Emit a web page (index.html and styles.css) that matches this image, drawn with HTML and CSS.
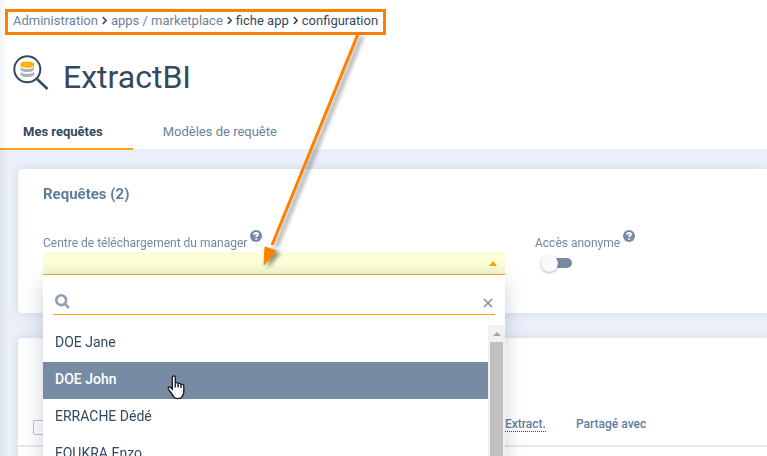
FILE: index.html
```html
<!DOCTYPE html>
<html lang="fr">
<head>
	<meta charset="utf-8">
	<title>ExtractBI - configuration</title>
	<link rel="stylesheet" href="styles.css">
</head>
<body>

<header class="pageHeader">
	<nav class="breadcrumb" aria-label="Fil d'Ariane">
		<a href="#">Administration</a>
		<svg class="chevron" viewBox="0 0 6 10"><path d="M1 1l4 4-4 4"/></svg>
		<a href="#">apps / marketplace</a>
		<svg class="chevron" viewBox="0 0 6 10"><path d="M1 1l4 4-4 4"/></svg>
		<span>fiche app</span>
		<svg class="chevron" viewBox="0 0 6 10"><path d="M1 1l4 4-4 4"/></svg>
		<span>configuration</span>
	</nav>

	<div class="appTitle">
		<svg class="appLogo" viewBox="0 0 36 36">
			<circle cx="14.300" cy="14.300" r="13" fill="#fff" stroke="#34495e" stroke-width="2"/>
			<path d="M24 24l10.500 10" stroke="#34495e" stroke-width="2.500" fill="none"/>
			<path d="M7.500 16.300c1 2.600 12.500 2.600 13.500 0v3.400c-1 3.200-12.500 3.200-13.500 0z" fill="#a9b3be"/>
			<path d="M7.500 11.300c1 2.600 12.500 2.600 13.500 0v3.400c-1 3.200-12.500 3.200-13.500 0z" fill="#a9b3be"/>
			<path d="M7.500 8.500c1-2.800 12.500-2.800 13.500 0v2.200c-1 2.800-12.500 2.800-13.500 0z" fill="#fbb400"/>
			<path d="M7.500 11.600c1 2.600 12.500 2.600 13.500 0M7.500 16.200c1 2.800 12.500 2.800 13.500 0" fill="none" stroke="#fff"/>
		</svg>
		<h1>ExtractBI</h1>
	</div>

	<nav class="tabs">
		<a class="tab tabActive" href="#">Mes requêtes</a>
		<a class="tab" href="#">Modèles de requête</a>
	</nav>
</header>

<main class="content">
	<section class="card settings">
		<h2>Requêtes (2)</h2>
		<div class="fields">
			<div class="field fieldManager">
				<div class="fieldLabel">
					<label id="managerLabel" for="manager">Centre de téléchargement du manager</label>
					<svg class="help" viewBox="0 0 12 12"><circle cx="6" cy="6" r="6"/><path d="M4.200 4.700c0-2.300 3.700-2.200 3.700-.2 0 1.300-1.700 1.200-1.700 2.500M6.200 8.200v1.500"/></svg>
				</div>
				<button class="combo" id="manager" type="button" aria-haspopup="listbox" aria-expanded="true" aria-labelledby="managerLabel">
					<svg class="caret" viewBox="0 0 8 5"><path d="M0 5l4-5 4 5z"/></svg>
				</button>
				<div class="dropdown">
					<div class="search">
						<svg class="searchIcon" viewBox="0 0 14 14"><circle cx="5.800" cy="5.800" r="4.600"/><path d="M9.200 9.200l3.800 3.800"/></svg>
						<input type="text" aria-label="Rechercher">
						<button class="clear" type="button" aria-label="Effacer">
							<svg viewBox="0 0 10 10"><path d="M1 1l8 8M9 1l-8 8"/></svg>
						</button>
					</div>
					<div class="results">
						<ul role="listbox" aria-labelledby="managerLabel">
							<li role="option">DOE Jane</li>
							<li role="option" class="hover" aria-selected="true">DOE John
								<svg class="cursor" viewBox="0 0 18 24"><path d="M5 2.200C5 .5 7.800.5 7.800 2.200V8c.3-1.200 2.700-1 2.800.6.5-1 2.600-.8 2.700.9.500-.9 2.700-.7 2.700 1.200v5.500c0 2-1.300 3.500-1.700 4.800-1.500 2.300-6.500 2.300-8 0C5.500 18.500 2.500 16 1.200 13.500c-.7-1.700 1-2.600 2.200-1.500L5 13.500z"/><path d="M7.800 8v4M10.600 9v3M13.300 10v2.500"/></svg>
							</li>
							<li role="option">ERRACHE Dédé</li>
							<li role="option">FOUKRA Enzo</li>
						</ul>
						<div class="scrollbar">
							<svg class="scrollUp" viewBox="0 0 8 4"><path d="M0 4l4-4 4 4z"/></svg>
							<div class="scrollThumb"></div>
						</div>
					</div>
				</div>
			</div>
			<div class="field">
				<div class="fieldLabel">
					<label for="anonymous">Accès anonyme</label>
					<svg class="help" viewBox="0 0 12 12"><circle cx="6" cy="6" r="6"/><path d="M4.200 4.700c0-2.300 3.700-2.200 3.700-.2 0 1.300-1.700 1.200-1.700 2.500M6.200 8.200v1.500"/></svg>
				</div>
				<input class="switch" id="anonymous" type="checkbox" role="switch">
			</div>
		</div>
	</section>

	<section class="card list">
		<table>
			<thead>
				<tr>
					<th class="colCheck"><input type="checkbox" aria-label="Tout sélectionner"></th>
					<th class="colExtract"><abbr>Extract.</abbr></th>
					<th>Partagé avec</th>
				</tr>
			</thead>
		</table>
	</section>
</main>

<svg class="arrow" viewBox="0 0 130 245">
	<path d="M103 0L17 211" stroke="#ff8000" stroke-width="3" fill="none"/>
	<path d="M9 231l1-18 11 4z" fill="#ff8000" stroke="#ff8000"/>
</svg>

</body>
</html>
```
FILE: styles.css
```css
* {
	box-sizing: border-box;
}
body {
	margin: 0;
	height: 100vh;
	overflow: hidden;
	background: #eaeff9;
	font-family: Roboto, "Liberation Sans", sans-serif;
	font-size: 13px;
	color: #34495e;
}
/* shadow of the side menu */
body::before {
	content: "";
	position: fixed;
	top: 0;
	bottom: 0;
	left: 0;
	width: 8px;
	background: linear-gradient(to right, rgba(52, 73, 110, 0.07), transparent);
}
a {
	color: #6a839c;
	text-decoration: none;
}
h1, h2, ul {
	margin: 0;
	padding: 0;
}
button, input {
	font: inherit;
	color: inherit;
}
svg {
	display: block;
	flex: none;
}

.pageHeader {
	padding-top: 9px;
	background: #fff;
}
.breadcrumb {
	display: flex;
	align-items: center;
	gap: 4px;
	width: max-content;
	height: 26px;
	margin-left: 5px;
	padding: 0 5px 3px;
	border: 3px solid #ff8000;
}
.chevron {
	width: 5px;
	height: 9px;
	fill: none;
	stroke: #34495e;
	stroke-width: 2;
}
.appTitle {
	display: flex;
	align-items: center;
	gap: 14px;
	height: 80px;
	padding-left: 13px;
}
.appTitle h1 {
	margin-top: 4px;
	font-size: 32px;
	font-weight: 400;
	line-height: 40px;
}
.appLogo {
	width: 36px;
	height: 36px;
	margin-bottom: 4px;
}
.tabs {
	display: flex;
	gap: 6px;
	height: 34px;
}
.tab {
	height: 35px;
	padding: 8px 24px 0;
	line-height: 18px;
}
.tabActive {
	padding: 8px 30px 0 23px;
	border-bottom: 2px solid #ffa500;
	color: #34495e;
	font-weight: 700;
}

.content {
	display: flex;
	flex-direction: column;
	gap: 25px;
	padding: 20px 0 0 18px;
}
.card {
	background: #fff;
	border-radius: 4px 0 0 4px;
	box-shadow: 0 0 10px rgba(52, 73, 94, 0.12);
}
.settings {
	position: relative;
	z-index: 1;
	padding: 15px 25px 38px;
}
.card h2 {
	font-size: 15px;
	font-weight: 700;
	line-height: 20px;
	color: #5f7d9b;
}
.fields {
	display: flex;
	gap: 30px;
	margin-top: 25px;
}
.field {
	position: relative;
}
.fieldManager {
	flex: 0 1 462px;
}
.fieldLabel {
	display: flex;
	gap: 3px;
	height: 23px;
	font-size: 12px;
	line-height: 28px;
	color: #7088a0;
}
.help {
	width: 12px;
	height: 12px;
	margin-top: 1px;
	fill: #778ba3;
}
.help path {
	fill: none;
	stroke: #fff;
	stroke-width: 2;
}
.combo {
	display: flex;
	align-items: center;
	justify-content: flex-end;
	width: 100%;
	height: 23px;
	padding: 0 8px;
	border: 0;
	border-bottom: 1px solid #f0a21c;
	background: linear-gradient(#fcffd6 50%, #f1f4cf);
}
.caret {
	width: 8px;
	height: 5px;
	fill: #ffa500;
}
.dropdown {
	position: absolute;
	top: 46px;
	left: 0;
	right: 0;
	background: #fff;
	box-shadow: 0 8px 20px rgba(52, 73, 110, 0.25);
	font-size: 14px;
}
.search {
	display: flex;
	align-items: center;
	height: 27px;
	margin: 13px 10px 10px;
	padding: 0 2px;
	border-bottom: 1px solid #ffa500;
}
.searchIcon {
	width: 15px;
	height: 15px;
	fill: none;
	stroke: #8b9fb2;
	stroke-width: 2.400;
}
.search input {
	flex: 1;
	min-width: 0;
	border: 0;
	outline: 0;
	background: none;
}
.clear {
	padding: 4px 0 0;
	border: 0;
	background: none;
}
.clear svg {
	width: 10px;
	height: 10px;
	fill: none;
	stroke: #778ba3;
	stroke-width: 1.500;
}
.results {
	display: flex;
	height: 185px;
	overflow: hidden;
}
.results ul {
	flex: 1;
	list-style: none;
}
.results li {
	position: relative;
	height: 37px;
	padding-left: 12px;
	line-height: 34px;
}
.results .hover {
	background: #778ba3;
	color: #fff;
	font-weight: 500;
}
.cursor {
	position: absolute;
	top: 13px;
	left: 124px;
	width: 19px;
	height: 25px;
	fill: #fff;
	stroke: #1b1b2a;
	stroke-width: 1.300;
}
.scrollbar {
	display: flex;
	flex-direction: column;
	align-items: center;
	width: 17px;
	background: #f1f1f1;
}
.scrollUp {
	width: 8px;
	height: 4px;
	margin: 7px 0 6px;
	fill: #a3a3a3;
}
.scrollThumb {
	flex: 1;
	width: 13px;
	background: #c1c1c1;
}

.switch {
	appearance: none;
	display: flex;
	align-items: center;
	width: 27px;
	height: 10px;
	margin: 6px 0 0 10px;
	border-radius: 5px;
	background: #778ba3;
}
.switch::before {
	content: "";
	width: 17px;
	height: 17px;
	margin-left: -4px;
	border-radius: 50%;
	background: #fafafa;
	box-shadow: 0 1px 3px rgba(0, 0, 0, 0.3);
}

.list {
	padding-top: 65px;
	height: 200px;
}
.list table {
	width: 100%;
	border-collapse: collapse;
	table-layout: fixed;
}
.list th {
	height: 43px;
	padding: 0;
	border-bottom: 2px solid #e4e9f0;
	text-align: left;
	font-size: 12px;
	font-weight: 500;
	color: #5f7d9b;
}
.list .colCheck {
	width: 487px;
	padding: 6px 0 0 15px;
}
.list .colExtract {
	width: 71px;
}
.list abbr {
	border-bottom: 1px dotted #34495e;
}
.colCheck input {
	appearance: none;
	display: block;
	width: 15px;
	height: 15px;
	margin: 0;
	border: 1px solid #b4c4d6;
	border-radius: 2px;
}

/* annotation from the breadcrumb to the manager field */
.arrow {
	position: absolute;
	z-index: 2;
	top: 34px;
	left: 255px;
	width: 130px;
	height: 245px;
	filter: drop-shadow(4px 2px 2px rgba(0, 0, 0, 0.45));
	pointer-events: none;
}
```
